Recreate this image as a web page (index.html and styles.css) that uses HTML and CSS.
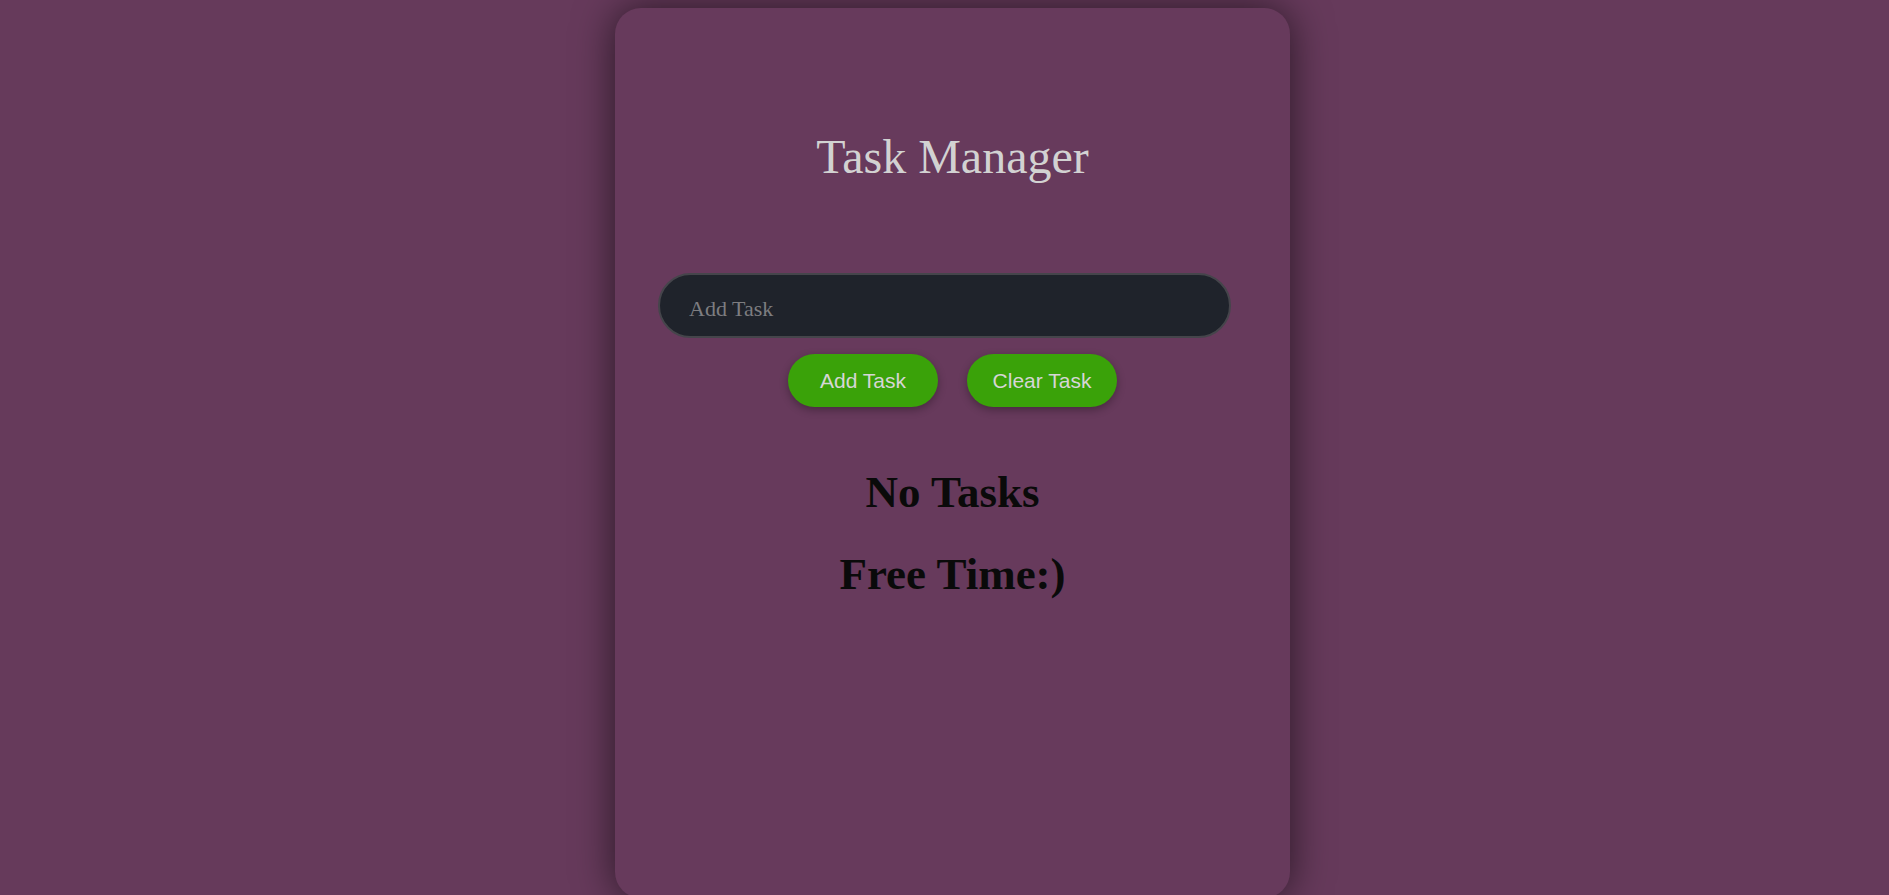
FILE: index.html
```html
<!DOCTYPE html>
<html>
<head>
<meta charset="utf-8">
<title>Task Manager</title>
<link rel="stylesheet" href="styles.css">
</head>
<body>
<div class="page">
  <main class="card">
    <h1 class="title">Task Manager</h1>
    <input class="task-input" type="text" placeholder="Add Task">
    <div class="actions">
      <button class="btn">Add Task</button>
      <button class="btn">Clear Task</button>
    </div>
    <h2 class="empty">No Tasks</h2>
    <h2 class="empty">Free Time:)</h2>
  </main>
</div>
</body>
</html>
```

FILE: styles.css
```css
html, body {
  margin: 0;
  padding: 0;
  background: #663a5b;
  height: 100%;
  overflow: hidden;
}

.page {
  display: flex;
  justify-content: center;
  padding: 8px 0 0 16px;
}

.card {
  box-sizing: border-box;
  width: 675px;
  height: 890px;
  background: #673a5c;
  border-radius: 26px;
  box-shadow: 0 0 40px rgba(0, 0, 0, 0.6);
  display: flex;
  flex-direction: column;
  padding-top: 121px;
  font-family: "Liberation Serif", "Times New Roman", serif;
}

.title {
  margin: 0;
  font-size: 48px;
  line-height: 56px;
  font-weight: normal;
  color: #d2d2d2;
  text-align: center;
}

.task-input {
  box-sizing: border-box;
  margin: 88px 0 0 43px;
  width: 573px;
  height: 65px;
  border-radius: 33px;
  border: 2px solid #45454b;
  background: #1f232b;
  padding: 6px 29px 0;
  font-family: "Liberation Serif", "Times New Roman", serif;
  font-size: 22px;
  color: #ccc;
  outline: none;
}

.task-input::placeholder {
  color: #7d7d80;
}

.actions {
  display: flex;
  justify-content: center;
  gap: 29px;
  margin-top: 16px;
}

.btn {
  width: 150px;
  height: 53px;
  border: none;
  border-radius: 27px;
  background: #3aa209;
  color: #d6d6d6;
  font-family: "Liberation Sans", Arial, sans-serif;
  font-size: 21px;
  box-shadow: 0 3px 8px rgba(0, 0, 0, 0.3);
  cursor: pointer;
}

.empty {
  margin: 0;
  font-size: 45px;
  line-height: 50px;
  font-weight: bold;
  color: #0a0a0a;
  text-align: center;
}

.actions + .empty {
  margin-top: 60px;
}

.empty + .empty {
  margin-top: 32px;
}
```
